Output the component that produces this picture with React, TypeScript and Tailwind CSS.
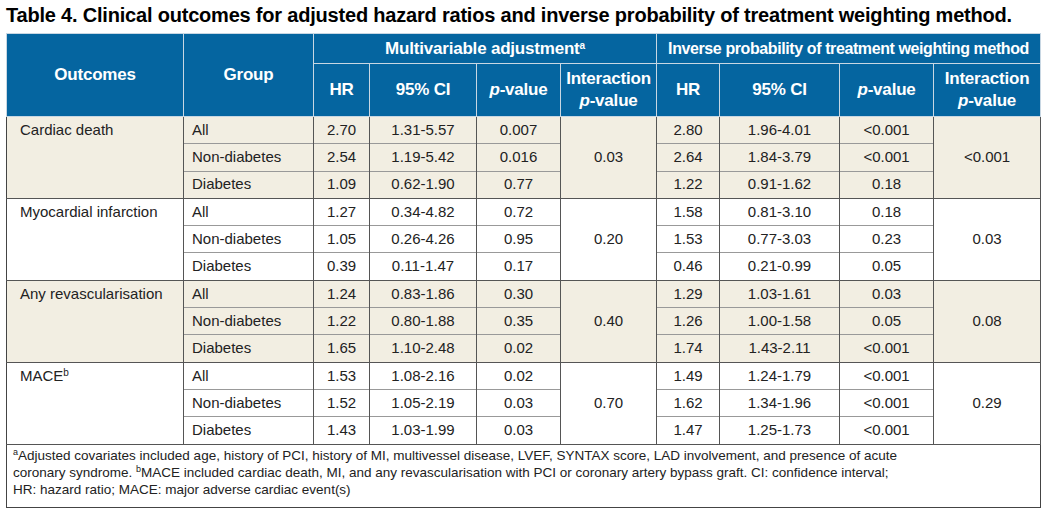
const GROUPS = [
  {
    outcome: "Cardiac death",
    sup: "",
    maInt: "0.03",
    ipInt: "<0.001",
    rows: [
      ["All", "2.70", "1.31-5.57", "0.007", "2.80", "1.96-4.01", "<0.001"],
      ["Non-diabetes", "2.54", "1.19-5.42", "0.016", "2.64", "1.84-3.79", "<0.001"],
      ["Diabetes", "1.09", "0.62-1.90", "0.77", "1.22", "0.91-1.62", "0.18"]
    ]
  },
  {
    outcome: "Myocardial infarction",
    sup: "",
    maInt: "0.20",
    ipInt: "0.03",
    rows: [
      ["All", "1.27", "0.34-4.82", "0.72", "1.58", "0.81-3.10", "0.18"],
      ["Non-diabetes", "1.05", "0.26-4.26", "0.95", "1.53", "0.77-3.03", "0.23"],
      ["Diabetes", "0.39", "0.11-1.47", "0.17", "0.46", "0.21-0.99", "0.05"]
    ]
  },
  {
    outcome: "Any revascularisation",
    sup: "",
    maInt: "0.40",
    ipInt: "0.08",
    rows: [
      ["All", "1.24", "0.83-1.86", "0.30", "1.29", "1.03-1.61", "0.03"],
      ["Non-diabetes", "1.22", "0.80-1.88", "0.35", "1.26", "1.00-1.58", "0.05"],
      ["Diabetes", "1.65", "1.10-2.48", "0.02", "1.74", "1.43-2.11", "<0.001"]
    ]
  },
  {
    outcome: "MACE",
    sup: "b",
    maInt: "0.70",
    ipInt: "0.29",
    rows: [
      ["All", "1.53", "1.08-2.16", "0.02", "1.49", "1.24-1.79", "<0.001"],
      ["Non-diabetes", "1.52", "1.05-2.19", "0.03", "1.62", "1.34-1.96", "<0.001"],
      ["Diabetes", "1.43", "1.03-1.99", "0.03", "1.47", "1.25-1.73", "<0.001"]
    ]
  }
];

// narrow bold face for the title and header cells
const cond = "font-['Liberation_Sans',Arial,sans-serif] font-bold tracking-[-0.2px]";
const th = `border border-[#c8d7e3] px-1 text-center align-middle text-[17px] leading-[22px] text-white ${cond}`;
const td = "border-x border-[#555] px-2 text-center align-middle";

const App = () => {
  return (
    <div className="h-[512px] w-[1049px] overflow-hidden bg-white pl-[6px] pt-[3px] font-['Liberation_Sans',Arial,sans-serif] text-[#222]">
      <h1 className={`whitespace-nowrap text-[20px] leading-[24px] text-black ${cond}`}>
        Table 4. Clinical outcomes for adjusted hazard ratios and inverse probability of treatment weighting method.
      </h1>
      <table className="mt-[6px] w-[1034px] table-fixed border-collapse border border-[#444] text-[15px]">
        <colgroup>
          <col className="w-[177px]" />
          <col className="w-[130px]" />
          <col className="w-[56px]" />
          <col className="w-[107px]" />
          <col className="w-[84px]" />
          <col className="w-[96px]" />
          <col className="w-[63px]" />
          <col className="w-[120px]" />
          <col className="w-[94px]" />
          <col className="w-[107px]" />
        </colgroup>
        <thead className="bg-[#0565a0]">
          <tr className="h-[30px]">
            <th rowSpan={2} className={th}>Outcomes</th>
            <th rowSpan={2} className={th}>Group</th>
            <th colSpan={4} className={th}>
              Multivariable adjustment<sup className="text-[10px]">a</sup>
            </th>
            <th colSpan={4} className={`${th} whitespace-nowrap !px-0 !text-[16px] !tracking-[-0.4px]`}>
              Inverse probability of treatment weighting method
            </th>
          </tr>
          <tr className="h-[53px]">
            <th className={th}>HR</th>
            <th className={th}>95% CI</th>
            <th className={th}><i>p</i>-value</th>
            <th className={th}>Interaction<br /><i>p</i>-value</th>
            <th className={th}>HR</th>
            <th className={th}>95% CI</th>
            <th className={th}><i>p</i>-value</th>
            <th className={th}>Interaction<br /><i>p</i>-value</th>
          </tr>
        </thead>
        {GROUPS.map((g, gi) => (
          <tbody key={g.outcome} className={`border-t border-[#555] ${gi % 2 === 0 ? "bg-[#f2eee2]" : "bg-white"}`}>
            {g.rows.map((r, ri) => (
              <tr key={r[0]} className={`h-[27.3px] ${ri > 0 ? "border-t border-[#999]" : ""}`}>
                {ri === 0 && (
                  <td rowSpan={3} className="border-r border-[#555] px-[13px] pt-[2px] text-left align-top">
                    {g.outcome}
                    {g.sup && <sup className="text-[10px]">{g.sup}</sup>}
                  </td>
                )}
                <td className={`${td} text-left`}>{r[0]}</td>
                <td className={td}>{r[1]}</td>
                <td className={td}>{r[2]}</td>
                <td className={td}>{r[3]}</td>
                {ri === 0 && <td rowSpan={3} className={td}>{g.maInt}</td>}
                <td className={td}>{r[4]}</td>
                <td className={td}>{r[5]}</td>
                <td className={td}>{r[6]}</td>
                {ri === 0 && <td rowSpan={3} className={td}>{g.ipInt}</td>}
              </tr>
            ))}
          </tbody>
        ))}
        <tfoot>
          <tr className="border-t border-[#555]">
            <td colSpan={10} className="h-[63px] px-[6px] pb-[6px] pt-[2px] align-top text-[13.5px] leading-[17px]">
              <sup className="text-[9px]">a</sup>Adjusted covariates included age, history of PCI, history of MI, multivessel disease, LVEF, SYNTAX score, LAD involvement, and presence of acute
              <br />
              coronary syndrome. <sup className="text-[9px]">b</sup>MACE included cardiac death, MI, and any revascularisation with PCI or coronary artery bypass graft. CI: confidence interval;
              <br />
              HR: hazard ratio; MACE: major adverse cardiac event(s)
            </td>
          </tr>
        </tfoot>
      </table>
    </div>
  );
};

export default App;
